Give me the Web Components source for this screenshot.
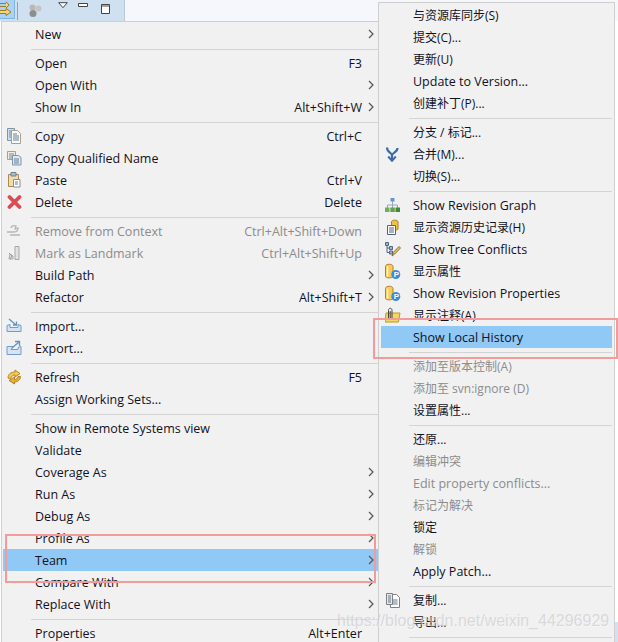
<!doctype html>
<html>
<head>
<meta charset="utf-8">
<style>
html,body{margin:0;padding:0;width:618px;height:642px;overflow:hidden;background:#fff}
body{font:12.5px "Open Sans","Noto Sans CJK SC",sans-serif;color:#1a1a2a;position:relative}
</style>
</head>
<body>
<eclipse-workbench></eclipse-workbench>
<script>
const ICONS={
copy:`<path d="M1.500 .5h7v12h-7z" fill="#d3deea" stroke="#7f93a8"/><path d="M3 3h4M3 5h4M3 7h4M3 9h4" stroke="#6d8cab"/><path d="M5.500 2.500h6l3 3v10h-9z" fill="#fbfaf5" stroke="#a8a088"/><path d="M7 6h4M7 8h6M7 10h6M7 12h6" stroke="#5f7f9f"/>`,
copyq:`<path d="M1.500 1.500h8v8h-8z" fill="#f2ecdc" stroke="#a8a088"/><path d="M3 4h5M3 6h3M3 8h3" stroke="#6d8cab"/><path d="M6.500 5.500h6l2.500 2v7.500H6.500z" fill="#dfe8f2" stroke="#7f93a8"/><path d="M8 9h5M8 11h5M8 13h5" stroke="#5f7f9f"/>`,
paste:`<path d="M2.500 2.500h10v12h-10z" fill="#f0dcb0" stroke="#a58a55"/><path d="M5 .5h5v3.500H5z" fill="#a9bccf" stroke="#6f8398"/><path d="M7.500 7.500h6.500v7.500H7.500z" fill="#fff" stroke="#8a8f8a"/><path d="M9 10h3M9 12h3" stroke="#5f7f9f"/>`,
del:`<path d="M3.500 3l10 10M13.500 3l-10 10" stroke="#dc4a54" stroke-width="3.800" stroke-linecap="round"/>`,
remove:`<path d="M5 5c0-2 3-3 5-2l-1 3 3-1c0 3-2 4-4 4H1m3 3h10" fill="none" stroke="#b5b5b5" stroke-width="1.300"/>`,
land:`<path d="M9 1.500h4v13H9zM4 9l3 2v3H3z" fill="#e2e2e2" stroke="#a8a8a8"/><path d="M3 8l3 3-2 3" fill="none" stroke="#9a9a9a"/>`,
imp:`<path d="M1 7.500l3-1v3h8v-3l3 1v6H1z" fill="#d6e4f2" stroke="#6f9ccb"/><path d="M3 1l7 6M7 7h3.500V3.500" fill="none" stroke="#5f93c8" stroke-width="1.300"/>`,
exp:`<path d="M1 6.500h6l-2 3h7v-2l3-1v8H1z" fill="#d6e4f2" stroke="#6f9ccb"/><path d="M6 8l7-6M9 1.500h4.500V6" fill="none" stroke="#5f93c8" stroke-width="1.300"/>`,
refresh:`<path d="M2 9C2 5 5 3 9 3V1l5 3.500L9 8V6C7 6 5.500 7 4.500 9.500z" fill="#f5c94a" stroke="#b07a1a" stroke-width=".9"/><path d="M14.500 7.500c0 3.500-3 5.500-6 5.500v2L3 11.500 8.500 8v2.500c2 0 3-1 3.500-3z" fill="#eeae36" stroke="#b07a1a" stroke-width=".9"/>`,
merge:`<path d="M2 1.500c0 5 5 5 5 8v4.500M12.500 2c0 4.500-5.500 4.500-5.500 7.500" fill="none" stroke="#3c6ca8" stroke-width="2.200"/><path d="M3.200 10.500L7 14.800l3.800-4.300" fill="none" stroke="#3c6ca8" stroke-width="2"/>`,
graph:`<path d="M7.500 4v4M2.500 11V8h10v3M7.500 8v3" fill="none" stroke="#9aa6b0"/><path d="M5.500 1h4v3.500h-4z" fill="#6a94d0"/><path d="M0 10.500h4.500V15H0z" fill="#74ad58"/><path d="M5.300 10.500h4.500V15H5.300z" fill="#62a24c"/><path d="M10.500 10.500H15V15h-4.500z" fill="#3d8a3d"/>`,
hist:`<path d="M6.500 3c0-2.500 6.500-2.500 6.500 0v7c0 1.500-6.500 1.500-6.500 0z" fill="#efc24a" stroke="#a9821c"/><path d="M2.500 6.500h8v9h-8z" fill="#fff" stroke="#55647a"/><path d="M4 9h5M4 11h5M4 13h5" stroke="#55647a"/>`,
tree:`<path d="M.5 1.500h3v3h-3zM4.500 5.500h3v3h-3zM4.500 10h3v3h-3z" fill="#9fb6d2" stroke="#4f6688"/><path d="M2 4.500V11.500h2.500M2 7h2.500" fill="none" stroke="#4f6688"/><path d="M7 15l1.200-3.500 5.800-6 1.500 1.500-5.800 6z" fill="#e8c26a" stroke="#7a6236" stroke-width=".9"/>`,
prop:`<path d="M.5 3.500c0-3 7.500-3 7.500 0v10c0 1.800-7.500 1.800-7.500 0z" fill="#f6cd5c" stroke="#c07a1c"/><path d="M2.500 3.500v10" stroke="#fdf0c0" stroke-width="1.600"/><circle cx="10.800" cy="11.500" r="4.500" fill="#3c8ad8"/><text x="8.800" y="14.300" font-size="8" font-weight="700" font-family="Liberation Sans" fill="#fff">P</text>`,
note:`<path d="M1 6h14l-1.500 9H0z" fill="#f3d85c" stroke="#b59a2c"/><path d="M3.500 13V3.500c0-3 3.500-3 3.500 0V11c0 1.200-1.800 1.200-1.800 0V4" fill="none" stroke="#444" stroke-width="1"/>`,
page:`<path d="M5.500 2.500h6l3 3v10h-9z" fill="#fff" stroke="#808080"/><path d="M1.500 1.500h6v11h-6z" fill="#e4e8ec" stroke="#808080"/><path d="M3 4h3M3 6h3M3 8h3M3 10h3" stroke="#607890"/><path d="M7.500 8h5M7.500 10h5M7.500 12h5" stroke="#607890"/>`
};
function icon(name){return `<svg viewBox="0 0 16 16" width="16" height="16">${ICONS[name]}</svg>`}

class MenuItem extends HTMLElement{
  connectedCallback(){
    const key=this.getAttribute("key")||"",sub=this.hasAttribute("sub"),ic=this.getAttribute("icon");
    const cjk=/[\u4e00-\u9fff]/.test(this.textContent);
    this.attachShadow({mode:"open"}).innerHTML=`<style>
      :host{display:flex;align-items:center;height:22px;color:#11111f;white-space:nowrap}
      :host([off]){color:#8c8c8c}
      :host([active]){background:#90c8f6}
      .ic{width:var(--gutter,32px);flex:none;display:flex;align-items:center;padding-left:var(--icon-pad,3px);box-sizing:border-box}
      .label{flex:1}
      .label.cjk{font-size:12px}
      .key{margin-right:2px}
      .arrow{width:14px;flex:none;display:flex;justify-content:center}
    </style>
    <span class="ic">${ic?icon(ic):""}</span><span class="label${cjk?" cjk":""}"><slot></slot></span>
    ${key?`<span class="key">${key}</span>`:""}
    <span class="arrow">${sub?`<svg width="7" height="10" viewBox="0 0 7 10"><path d="M1 1l4 4-4 4" fill="none" stroke="#555" stroke-width="1.200"/></svg>`:""}</span>`;
  }
}
class MenuSep extends HTMLElement{
  connectedCallback(){
    this.attachShadow({mode:"open"}).innerHTML=`<style>
      :host{display:flex;height:7px;align-items:center;padding-left:calc(var(--gutter,32px) - 4px)}
      i{display:block;flex:1;height:1px;background:#d4d4d4;margin-top:1px}
    </style><i></i>`;
  }
}
class PopupMenu extends HTMLElement{
  connectedCallback(){
    this.attachShadow({mode:"open"}).innerHTML=`<style>
      :host{display:block;background:#f1f1f1;border:1px solid #cfcfcf;box-sizing:border-box;overflow:hidden}
    </style><slot></slot>`;
  }
}
class TopBar extends HTMLElement{
  connectedCallback(){
    this.attachShadow({mode:"open"}).innerHTML=`<style>
      :host{display:flex;height:21px;background:#f5f7fc}
      .tools{width:125px;background:#cfe0f0;display:flex;align-items:center;border-right:1px solid #b8c8d8;box-sizing:border-box}
      .link{width:15px;height:19px;background:#a9d2f6;border-right:1px solid #7fb5e4;border-bottom:1px solid #7fb5e4;box-sizing:border-box;margin:-2px 2px 0 0;overflow:hidden}
      .sep{width:1px;height:18px;background:#8f9faf;margin-right:10px}
      svg{display:block;flex:none}
    </style>
    <div class="tools">
      <div class="link"><svg width="14" height="18" viewBox="0 0 14 18"><path d="M-2 3.500h8M-2 6.500h8M6 1.500l3 3.500-3 3" fill="#f4d57a" stroke="#a07a20"/><path d="M-2 10.500h8V8.500l5 3.500-5 3.500v-2h-8z" fill="#f4d57a" stroke="#a07a20"/></svg></div>
      <div class="sep"></div>
      <svg style="margin-right:16px" width="14" height="14" viewBox="0 0 14 14"><circle cx="4.500" cy="3.500" r="3" fill="#b8b8b8"/><circle cx="10.500" cy="4.500" r="3" fill="#c4c4c4"/><circle cx="5" cy="9.500" r="3.500" fill="#8e8e8e"/></svg>
      <svg style="margin-right:10px;margin-top:-10px" width="10" height="7" viewBox="0 0 10 7"><path d="M.7.700h8.600L5 5.700z" fill="#fff" stroke="#444"/></svg>
      <svg style="margin-right:13px;margin-top:-10px" width="10" height="5" viewBox="0 0 10 5"><path d="M.5.500h9v3h-9z" fill="#fff" stroke="#444"/></svg>
      <svg width="9" height="10" viewBox="0 0 9 10" style="margin-top:-3px"><path d="M.5.500h8v9h-8z" fill="#fff" stroke="#444"/><path d="M.5 2h8" stroke="#444"/></svg>
    </div>`;
  }
}
class EclipseWorkbench extends HTMLElement{
  connectedCallback(){
    const m=(t,o={})=>`<menu-item ${o.k?`key="${o.k}"`:""} ${o.s?"sub":""} ${o.i?`icon="${o.i}"`:""} ${o.off?"off":""} ${o.a?"active":""}>${t}</menu-item>`;
    const s=`<menu-sep></menu-sep>`;
    this.attachShadow({mode:"open"}).innerHTML=`<style>
      :host{display:block;width:618px;height:642px;position:relative;overflow:hidden}
      .mark{position:absolute;border:2px solid #f39a9a;box-sizing:border-box}
      .main{position:absolute;left:1px;top:21px;width:378px;height:640px;padding:1px 0 0 1px;--gutter:32px;--icon-pad:3px}
      .team{position:absolute;left:378px;top:2px;width:237px;height:660px;padding:1px 2px 0 2px;--gutter:32px;--icon-pad:4px}
      .wm{position:absolute;left:337px;top:612px;font:16px "Liberation Sans",sans-serif;color:rgba(200,200,205,.62);white-space:nowrap;text-shadow:1px 1px 0 rgba(255,255,255,.35)}
      .corner{position:absolute;left:615px;top:622px;width:3px;height:20px;background:#d6e0f5}
    </style>
    <top-bar></top-bar>
    <popup-menu class="main">
      ${m("New",{s:1})}${s}
      ${m("Open",{k:"F3"})}${m("Open With",{s:1})}${m("Show In",{k:"Alt+Shift+W",s:1})}${s}
      ${m("Copy",{k:"Ctrl+C",i:"copy"})}${m("Copy Qualified Name",{i:"copyq"})}${m("Paste",{k:"Ctrl+V",i:"paste"})}${m("Delete",{k:"Delete",i:"del"})}${s}
      ${m("Remove from Context",{k:"Ctrl+Alt+Shift+Down",i:"remove",off:1})}${m("Mark as Landmark",{k:"Ctrl+Alt+Shift+Up",i:"land",off:1})}${m("Build Path",{s:1})}${m("Refactor",{k:"Alt+Shift+T",s:1})}${s}
      ${m("Import...",{i:"imp"})}${m("Export...",{i:"exp"})}${s}
      ${m("Refresh",{k:"F5",i:"refresh"})}${m("Assign Working Sets...")}${s}
      ${m("Show in Remote Systems view")}${m("Validate")}${m("Coverage As",{s:1})}${m("Run As",{s:1})}${m("Debug As",{s:1})}${m("Profile As",{s:1})}${m("Team",{s:1,a:1})}${m("Compare With",{s:1})}${m("Replace With",{s:1})}${s}
      ${m("Properties",{k:"Alt+Enter"})}
    </popup-menu>
    <popup-menu class="team">
      ${m("与资源库同步(S)")}${m("提交(C)...")}${m("更新(U)")}${m("Update to Version...")}${m("创建补丁(P)...")}${s}
      ${m("分支 / 标记...")}${m("合并(M)...",{i:"merge"})}${m("切换(S)...")}${s}
      ${m("Show Revision Graph",{i:"graph"})}${m("显示资源历史记录(H)",{i:"hist"})}${m("Show Tree Conflicts",{i:"tree"})}${m("显示属性",{i:"prop"})}${m("Show Revision Properties",{i:"prop"})}${m("显示注释(A)",{i:"note"})}${m("Show Local History",{a:1})}${s}
      ${m("添加至版本控制(A)",{off:1})}${m("添加至 svn:ignore (D)",{off:1})}${m("设置属性...")}${s}
      ${m("还原...")}${m("编辑冲突",{off:1})}${m("Edit property conflicts...",{off:1})}${m("标记为解决",{off:1})}${m("锁定")}${m("解锁",{off:1})}${m("Apply Patch...")}${s}
      ${m("复制...",{i:"page"})}${m("导出...")}${s}
    </popup-menu>
    <div class="mark" style="left:5px;top:534px;width:371px;height:49px"></div>
    <div class="mark" style="left:373px;top:318px;width:245px;height:41px"></div>
    <div class="corner"></div>
    <div class="wm">https://blog.csdn.net/weixin_44296929</div>`;
  }
}
customElements.define("menu-item",MenuItem);
customElements.define("menu-sep",MenuSep);
customElements.define("popup-menu",PopupMenu);
customElements.define("top-bar",TopBar);
customElements.define("eclipse-workbench",EclipseWorkbench);
</script>
</body>
</html>
